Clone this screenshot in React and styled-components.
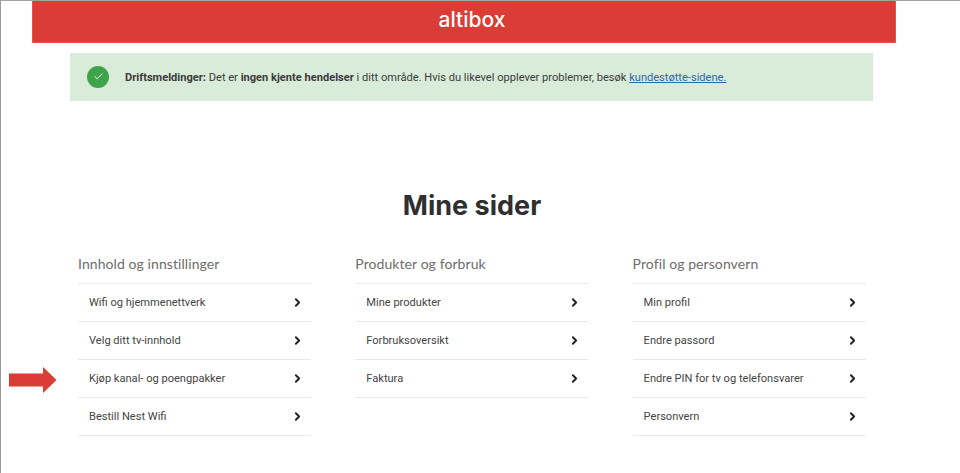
import React from 'react'
import styled, { createGlobalStyle } from 'styled-components'
import { ChevronRight, Check } from 'lucide-react'

const GlobalStyle = createGlobalStyle`
html, body {
  margin: 0;
  padding: 0;
  background: #fff;
  overflow: hidden;
}
`

const Page = styled.div`
  width: 960px;
  height: 473px;
  box-sizing: border-box;
  border-left: 1px solid #9a9a9a;
  border-top: 1px solid #a3a3a3;
  font-family: Roboto, sans-serif;
  color: #333;
  display: flex;
  flex-direction: column;
`

const Header = styled.header`
  margin-left: 31px;
  width: 864px;
  height: 42px;
  box-sizing: border-box;
  background: #d93d35;
  border: 1px solid #e4534b;
  border-top: none;
  display: flex;
  align-items: center;
  justify-content: center;
`

const Logo = styled.span`
  font-family: Inter, sans-serif;
  font-weight: 500;
  font-size: 21px;
  color: #fff;
  margin-top: -4px;
  margin-left: 16px;
`

const Banner = styled.div`
  margin: 10px 0 0 69px;
  width: 803px;
  height: 47.5px;
  background: #d9ecda;
  display: flex;
  align-items: center;
  padding-left: 17px;
  box-sizing: border-box;
  font-size: 11.09px;
  color: #3b3b3b;
`

const BannerText = styled.span`
  margin-top: 1px;
`

const CheckCircle = styled.span`
  width: 22px;
  height: 22px;
  border-radius: 50%;
  background: #3fa34a;
  color: #fff;
  display: flex;
  align-items: center;
  justify-content: center;
  margin-right: 16px;
  flex-shrink: 0;
`

const BannerLink = styled.a`
  color: #2f67a8;
  text-decoration: underline;
`

const Title = styled.h1`
  margin: 88.5px 0 0 0;
  width: 942px;
  text-align: center;
  font-family: Inter, sans-serif;
  font-weight: 700;
  font-size: 27px;
  line-height: 34px;
  color: #2f2f2f;
`

const Columns = styled.div`
  display: grid;
  grid-template-columns: repeat(3, 233px);
  column-gap: 44.3px;
  margin: 33px 0 0 77px;
`

const Column = styled.section`
  display: flex;
  flex-direction: column;
`

const Heading = styled.h2`
  margin: 0;
  height: 27px;
  font-family: Lato, sans-serif;
  font-weight: 400;
  font-size: 14px;
  line-height: 16px;
  letter-spacing: 0.08px;
  color: #6f6c6c;
  border-bottom: 1px solid #ececec;
  box-sizing: content-box;
`

const RowWrap = styled.div`
  position: relative;
`

const Row = styled.a`
  height: 37px;
  border-bottom: 1px solid #e8e8e8;
  display: flex;
  align-items: center;
  justify-content: space-between;
  padding: 0 7px 0 11px;
  font-size: 11.09px;
  color: #444;
`

const Chevron = styled(ChevronRight)`
  color: #222;
`

const Arrow = styled.svg`
  position: absolute;
  left: -69px;
  top: 7px;
`

const columns = [
  {
    title: 'Innhold og innstillinger',
    links: ['Wifi og hjemmenettverk', 'Velg ditt tv-innhold', 'Kjøp kanal- og poengpakker', 'Bestill Nest Wifi'],
  },
  {
    title: 'Produkter og forbruk',
    links: ['Mine produkter', 'Forbruksoversikt', 'Faktura'],
  },
  {
    title: 'Profil og personvern',
    links: ['Min profil', 'Endre passord', 'Endre PIN for tv og telefonsvarer', 'Personvern'],
  },
]

export default function App() {
  return (
    <Page>
      <GlobalStyle />
      <Header>
        <Logo>altibox</Logo>
      </Header>
      <Banner>
        <CheckCircle>
          <Check size={11} strokeWidth={2} />
        </CheckCircle>
        <BannerText>
          <b>Driftsmeldinger:</b> Det er <b>ingen kjente hendelser</b> i ditt område. Hvis du likevel opplever
          problemer, besøk <BannerLink>kundestøtte-sidene.</BannerLink>
        </BannerText>
      </Banner>
      <Title>Mine sider</Title>
      <Columns>
        {columns.map((col) => (
          <Column key={col.title}>
            <Heading>{col.title}</Heading>
            {col.links.map((link) => (
              <RowWrap key={link}>
                {link.startsWith('Kjøp') && (
                  <Arrow width="48" height="26" viewBox="0 0 48 26">
                    <path d="M0 6.5H34V0L47.5 13L34 26V19.5H0Z" fill="#d93d35" />
                  </Arrow>
                )}
                <Row>
                  {link}
                  <Chevron size={13} strokeWidth={3.5} />
                </Row>
              </RowWrap>
            ))}
          </Column>
        ))}
      </Columns>
    </Page>
  )
}
